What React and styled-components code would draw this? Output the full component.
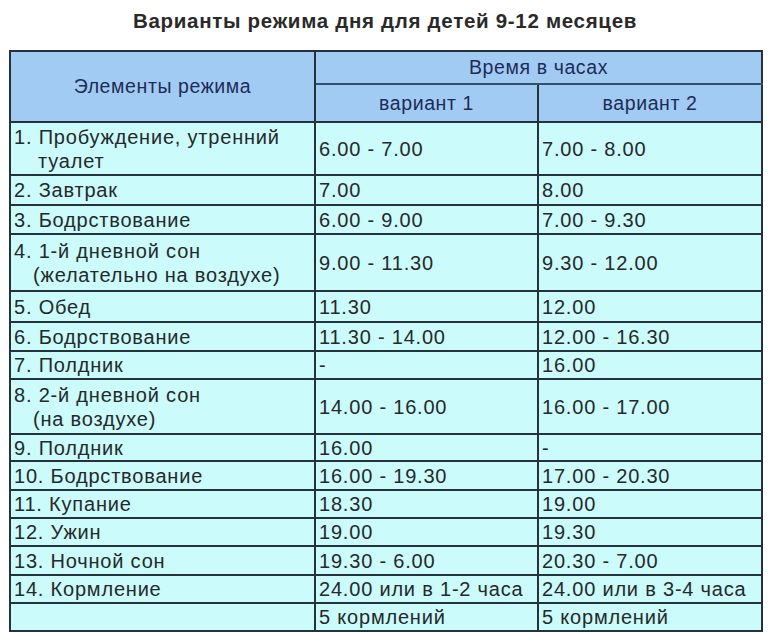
import React from "react";
import styled, { createGlobalStyle } from "styled-components";

const Global = createGlobalStyle`
  html, body {
    margin: 0;
    padding: 0;
    background: #ffffff;
    font-family: "Liberation Sans", Arial, sans-serif;
  }
`;

const Page = styled.div`
  width: 770px;
  height: 632px;
  overflow: hidden;
  padding: 0 0 0 9px;
  box-sizing: border-box;
`;

const Title = styled.h1`
  margin: 0;
  height: 50px;
  line-height: 42px;
  font-size: 20.5px;
  letter-spacing: 0.7px;
  font-weight: bold;
  color: #2a2a2a;
  text-align: center;
  padding-right: 9px;
`;

const Table = styled.table`
  width: 752px;
  border-collapse: collapse;
  table-layout: fixed;
  border: 2px solid #24323a;
`;

const Head = styled.th`
  background: #a2cbf3;
  color: #1d2c57;
  font-weight: normal;
  font-size: 19.5px;
  letter-spacing: 0.6px;
  text-align: center;
  border: 2px solid #24323a;
  border-bottom-color: ${(p) => (p.$soft ? "#34506e" : "#24323a")};
  height: ${(p) => p.$h}px;
  padding: 0;
  box-sizing: border-box;
`;

const Cell = styled.td`
  background: #cbfbfb;
  color: #26292a;
  font-size: 20px;
  letter-spacing: 0.8px;
  line-height: 24px;
  border: 2px solid #24323a;
  padding: 0 0 0 3px;
  height: ${(p) => p.$h}px;
  vertical-align: middle;
  white-space: nowrap;
  overflow: hidden;
  box-sizing: border-box;
`;

const Indent = styled.span`
  display: block;
  padding-left: ${(p) => p.$pad}px;
`;

const rows = [
  { n: "1. Пробуждение, утренний", n2: "туалет", pad: 24, a: "6.00 - 7.00", b: "7.00 - 8.00", h: 53 },
  { n: "2. Завтрак", a: "7.00", b: "8.00", h: 30 },
  { n: "3. Бодрствование", a: "6.00 - 9.00", b: "7.00 - 9.30", h: 29 },
  { n: "4. 1-й дневной сон", n2: "(желательно на воздухе)", pad: 19, a: "9.00 - 11.30", b: "9.30 - 12.00", h: 57 },
  { n: "5. Обед", a: "11.30", b: "12.00", h: 31 },
  { n: "6. Бодрствование", a: "11.30 - 14.00", b: "12.00 - 16.30", h: 29 },
  { n: "7. Полдник", a: " -", b: "16.00", h: 28 },
  { n: "8. 2-й дневной сон", n2: "(на воздухе)", pad: 19, a: "14.00 - 16.00", b: "16.00 - 17.00", h: 55 },
  { n: "9. Полдник", a: "16.00", b: " -", h: 27 },
  { n: "10. Бодрствование", a: "16.00 - 19.30", b: "17.00 - 20.30", h: 29 },
  { n: "11. Купание", a: "18.30", b: "19.00", h: 28 },
  { n: "12. Ужин", a: "19.00", b: "19.30", h: 28 },
  { n: "13. Ночной сон", a: "19.30 - 6.00", b: "20.30 - 7.00", h: 29 },
  { n: "14. Кормление", a: "24.00 или в 1-2 часа", b: "24.00 или в 3-4 часа", h: 28 },
  { n: "", a: "5 кормлений", b: "5 кормлений", h: 28 },
];

export default function App() {
  return (
    <Page>
      <Global />
      <Title>Варианты режима дня для детей 9-12 месяцев</Title>
      <Table>
        <colgroup>
          <col style={{ width: 305 }} />
          <col style={{ width: 223 }} />
          <col style={{ width: 224 }} />
        </colgroup>
        <thead>
          <tr>
            <Head rowSpan={2} $h={33}>Элементы режима</Head>
            <Head colSpan={2} $h={33} $soft>Время в часах</Head>
          </tr>
          <tr>
            <Head $h={38}>вариант 1</Head>
            <Head $h={38}>вариант 2</Head>
          </tr>
        </thead>
        <tbody>
          {rows.map((r, i) => (
            <tr key={i}>
              <Cell $h={r.h}>
                {r.n}
                {r.n2 && <Indent $pad={r.pad}>{r.n2}</Indent>}
              </Cell>
              <Cell $h={r.h}>{r.a}</Cell>
              <Cell $h={r.h}>{r.b}</Cell>
            </tr>
          ))}
        </tbody>
      </Table>
    </Page>
  );
}
